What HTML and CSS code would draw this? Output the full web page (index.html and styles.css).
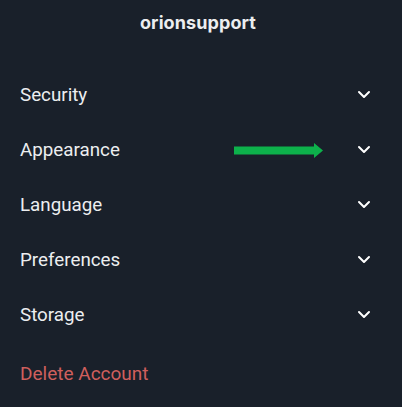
FILE: index.html
```html
<!DOCTYPE html>
<html>
<head>
<meta charset="utf-8">
<link rel="stylesheet" href="styles.css">
</head>
<body>
<div class="page">
  <header class="header">orionsupport</header>
  <ul class="menu">
    <li class="row"><span>Security</span><svg class="chev" viewBox="0 0 14 10"><path d="M2 2l5 5 5-5"/></svg></li>
    <li class="row"><span>Appearance</span>
      <svg class="arrow" viewBox="0 0 89 15"><path d="M0 3.5h80V0l9 7.5-9 7.5v-3.5H0z"/></svg>
      <svg class="chev" viewBox="0 0 14 10"><path d="M2 2l5 5 5-5"/></svg></li>
    <li class="row"><span>Language</span><svg class="chev" viewBox="0 0 14 10"><path d="M2 2l5 5 5-5"/></svg></li>
    <li class="row"><span>Preferences</span><svg class="chev" viewBox="0 0 14 10"><path d="M2 2l5 5 5-5"/></svg></li>
    <li class="row"><span>Storage</span><svg class="chev" viewBox="0 0 14 10"><path d="M2 2l5 5 5-5"/></svg></li>
  </ul>
  <div class="delete">Delete Account</div>
</div>
</body>
</html>
```
FILE: styles.css
```css
html, body {
  margin: 0;
  padding: 0;
  background: #19202a;
  height: 100%;
}
.page {
  font-family: Roboto, "Noto Sans", sans-serif;
  color: #eceef0;
  width: 402px;
  height: 407px;
  overflow: hidden;
}
.header {
  height: 45px;
  display: flex;
  align-items: center;
  justify-content: center;
  padding-right: 6px;
  font-family: Inter, "Noto Sans", sans-serif;
  font-weight: 700;
  font-size: 18px;
  letter-spacing: 0.1px;
}
.menu {
  list-style: none;
  margin: 0;
  padding: 22px 0 0 0;
}
.row {
  position: relative;
  height: 55px;
  display: flex;
  align-items: center;
  justify-content: space-between;
  padding: 0 31px 0 20px;
  font-size: 18.8px;
  font-weight: 400;
}
.row .chev {
  margin-top: 1px;
}
.chev {
  width: 14px;
  height: 10px;
  fill: none;
  stroke: #ffffff;
  stroke-width: 2;
  stroke-linecap: round;
  stroke-linejoin: round;
}
.arrow {
  position: absolute;
  left: 234px;
  top: 21px;
  width: 89px;
  height: 15px;
  fill: #0db14b;
}
.delete {
  padding: 20px 20px 0 20px;
  font-size: 19px;
  color: #cf5f5d;
}
```
